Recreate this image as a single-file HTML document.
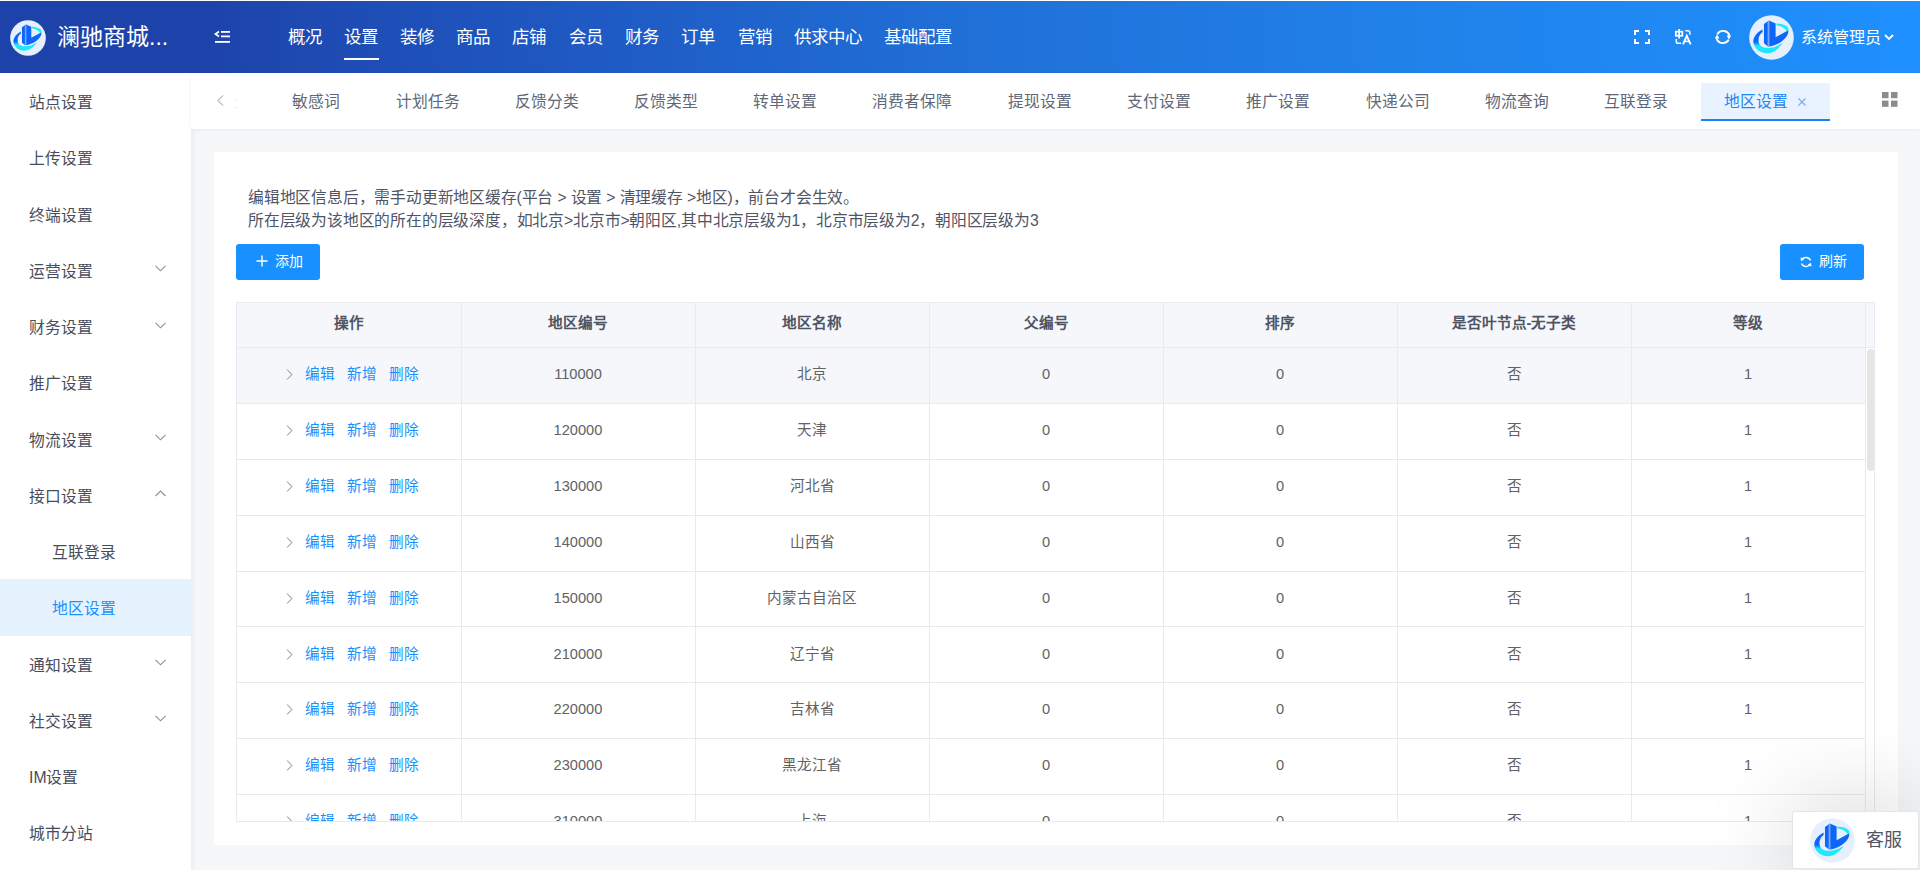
<!DOCTYPE html>
<html lang="zh-CN">
<head>
<meta charset="utf-8">
<style>
*{box-sizing:border-box;margin:0;padding:0}
html,body{width:1920px;height:870px;overflow:hidden}
body{position:relative;background:#f6f7f9;font-family:"Liberation Sans",sans-serif;color:#606266}
.abs{position:absolute}
.hdr{position:absolute;left:0;top:1px;width:1920px;height:72px;
background:linear-gradient(90deg,#1d42aa 0%,#1d42aa 9.95%,#1e4ab2 16.1%,#1f56c0 27.6%,#2070d8 50.5%,#2082e9 73.4%,#1e90ff 100%)}
.topw{position:absolute;left:0;top:0;width:1920px;height:1px;background:#fff}
.brand{position:absolute;left:57px;top:20px;font-size:23px;color:#fff;line-height:34px;white-space:nowrap}
.nav{position:absolute;top:23.3px;font-size:17.5px;color:#fff;line-height:28px;white-space:nowrap}
.navul{position:absolute;left:344px;top:58px;width:35px;height:2px;background:#fff}
.side{position:absolute;left:0;top:73px;width:191px;height:797px;background:#fff}
.sideshadow{position:absolute;left:191px;top:73px;width:5px;height:797px;background:linear-gradient(90deg,rgba(0,0,0,0.04),rgba(0,0,0,0))}
.si{position:absolute;left:0;width:191px;height:56.25px;line-height:59px;font-size:15.75px;color:#474d5c;padding-left:29px;white-space:nowrap}
.si.sub{padding-left:52px}
.si.act{background:#e6f3ff;color:#1890ff}
.chev{position:absolute;left:155px;top:23.5px;width:11px;height:7px}
.tabs{position:absolute;left:191px;top:73px;width:1729px;height:56px;background:#fff;box-shadow:0 1px 4px rgba(0,21,41,0.06)}
.tab{position:absolute;height:55px;line-height:57px;font-size:15.75px;color:#606778;white-space:nowrap}
.card{position:absolute;left:214px;top:152px;width:1684px;height:693px;background:#fff}
.tip{position:absolute;left:248px;font-size:15.75px;letter-spacing:-0.2px;color:#4f5565;white-space:nowrap;line-height:23px}
.btn{position:absolute;top:244px;width:84px;height:36px;background:#1890ff;border-radius:3px;color:#fff;font-size:14px}
.tbl{position:absolute;left:236px;top:302px;width:1639px;height:520px;border:1px solid #e8eaf2;overflow:hidden;background:#fff}
.row{position:absolute;left:0;width:1629px;border-bottom:1px solid #e8eaf2}
.cell{position:absolute;top:0;height:100%;text-align:center;padding-right:2px;font-size:14.625px;color:#606266;white-space:nowrap}
.hrow .cell{font-weight:bold;color:#4f5462}
.lk{color:#1890ff;margin-right:12px}
.op{padding-left:8px}
.lk:last-child{margin-right:0}
.kefu{position:absolute;left:1792px;top:811px;width:127px;height:58px;background:#fff;border:1px solid #e4e6ea;border-radius:3px;box-shadow:0 0 90px rgba(0,0,0,0.21)}

.vl{position:absolute;top:0;width:1px;height:520px;background:#e8eaf2}

</style>
</head>
<body>
<div class="topw"></div><div class="hdr"></div>
<svg viewBox="0 0 46 46" width="36" height="36" style="position:absolute;left:10px;top:20px">
<defs><linearGradient id="lg10" x1="0" y1="27.5" x2="0" y2="31.5" gradientUnits="userSpaceOnUse"><stop offset="0" stop-color="#0b66f9"/><stop offset="1" stop-color="#1ee8fb"/></linearGradient></defs>
<circle cx="23" cy="23" r="22.8" fill="#e6effd"/>
<path d="M13.8 14.8 C7 18.5 3.5 24 4.6 29 C5.8 35 12 39.2 18 39.2 C25 39.2 30.5 34.5 34 29 C29 32 24 33.8 18.5 33.6 C13 33.4 9.6 30.5 9.7 25.5 C9.8 21.5 11.8 18.8 14 17.4 Z" fill="url(#lg10)"/>
<path d="M15.3 9.3 L20.4 5.6 L27.2 8.7 L27.2 22.8 L40.2 15.6 C40.6 20 37 25 31 28.5 C27.5 30.5 23 32 19.5 32.3 L15.3 29 Z" fill="#0b66f9"/>
<path d="M28 8.7 C33 8.9 38.5 10.5 40 13.4 C40.4 14.3 40.4 15.2 40.2 15.9 L38.5 16.8 C37.5 14 34 11.6 28 10.4 Z" fill="#1ee8fb"/>
<rect x="19" y="6.2" width="1.9" height="25.8" fill="#7ba6ff"/>
</svg>
<div class="brand">澜驰商城...</div>
<svg class="abs" style="left:214px;top:30px" width="17" height="14" viewBox="0 0 17 14">
<path d="M5 1.5 L1.5 4 L5 6.5" stroke="#fff" stroke-width="1.8" fill="none"/>
<rect x="7" y="1" width="9" height="1.8" fill="#fff"/><rect x="7" y="5.5" width="9" height="1.8" fill="#fff"/><rect x="1" y="11" width="15" height="1.8" fill="#fff"/>
</svg>
<div class="nav" style="left:288px">概况</div>
<div class="nav" style="left:344px">设置</div>
<div class="nav" style="left:400px">装修</div>
<div class="nav" style="left:456px">商品</div>
<div class="nav" style="left:512px">店铺</div>
<div class="nav" style="left:569px">会员</div>
<div class="nav" style="left:625px">财务</div>
<div class="nav" style="left:681px">订单</div>
<div class="nav" style="left:738px">营销</div>
<div class="nav" style="left:794px">供求中心</div>
<div class="nav" style="left:884px">基础配置</div>
<div class="navul"></div>
<svg class="abs" style="left:1634px;top:30px" width="16" height="14" viewBox="0 0 16 14">
<path d="M1 5 V1 H5 M11 1 H15 V5 M15 9 V13 H11 M5 13 H1 V9" stroke="#fff" stroke-width="2" fill="none"/></svg>
<svg class="abs" style="left:1675px;top:29px" width="17" height="16" viewBox="0 0 17 16">
<rect x="0.9" y="2.6" width="6.4" height="4.2" stroke="#fff" stroke-width="1.7" fill="none"/>
<path d="M4.1 0 V9.6" stroke="#fff" stroke-width="1.8"/>
<path d="M8 15.4 L11.8 6.8 L15.6 15.4" stroke="#fff" stroke-width="1.9" fill="none"/>
<path d="M9.4 12.4 H14.2" stroke="#fff" stroke-width="1.5"/>
<path d="M10.4 1.8 H13 Q14.8 1.8 14.8 3.6 V5.8" stroke="#fff" stroke-width="1.6" fill="none"/>
<path d="M1.3 10 V12.4 Q1.3 14.2 3.1 14.2 H6.2" stroke="#fff" stroke-width="1.6" fill="none"/>
</svg>
<svg class="abs" style="left:1715px;top:29px" width="16" height="16" viewBox="0 0 16 16">
<path d="M2.3 5.2 A6.7 6.7 0 0 1 14.5 6.8" stroke="#fff" stroke-width="1.9" fill="none"/>
<path d="M13.7 10.8 A6.7 6.7 0 0 1 1.5 9.2" stroke="#fff" stroke-width="1.9" fill="none"/>
<path d="M11.6 6.4 L16.2 6.4 L13.9 10.8Z" fill="#fff"/><path d="M-0.2 9.6 L4.4 9.6 L2.1 5.2Z" fill="#fff"/>
</svg>
<svg viewBox="0 0 46 46" width="45" height="45" style="position:absolute;left:1749px;top:15px">
<defs><linearGradient id="lg1749" x1="0" y1="27.5" x2="0" y2="31.5" gradientUnits="userSpaceOnUse"><stop offset="0" stop-color="#0b66f9"/><stop offset="1" stop-color="#1ee8fb"/></linearGradient></defs>
<circle cx="23" cy="23" r="22.8" fill="#e6effd"/>
<path d="M13.8 14.8 C7 18.5 3.5 24 4.6 29 C5.8 35 12 39.2 18 39.2 C25 39.2 30.5 34.5 34 29 C29 32 24 33.8 18.5 33.6 C13 33.4 9.6 30.5 9.7 25.5 C9.8 21.5 11.8 18.8 14 17.4 Z" fill="url(#lg1749)"/>
<path d="M15.3 9.3 L20.4 5.6 L27.2 8.7 L27.2 22.8 L40.2 15.6 C40.6 20 37 25 31 28.5 C27.5 30.5 23 32 19.5 32.3 L15.3 29 Z" fill="#0b66f9"/>
<path d="M28 8.7 C33 8.9 38.5 10.5 40 13.4 C40.4 14.3 40.4 15.2 40.2 15.9 L38.5 16.8 C37.5 14 34 11.6 28 10.4 Z" fill="#1ee8fb"/>
<rect x="19" y="6.2" width="1.9" height="25.8" fill="#7ba6ff"/>
</svg>
<div class="abs" style="left:1801px;top:24px;font-size:16px;line-height:28px;color:#fff;white-space:nowrap">系统管理员</div>
<svg class="abs" style="left:1884px;top:34px" width="10" height="7" viewBox="0 0 10 7"><path d="M1 1 L5 5 L9 1" stroke="#fff" stroke-width="1.8" fill="none"/></svg>
<div class="side"></div><div class="sideshadow"></div>
<div class="si" style="top:73.0px">站点设置</div>
<div class="si" style="top:129.25px">上传设置</div>
<div class="si" style="top:185.5px">终端设置</div>
<div class="si" style="top:241.75px">运营设置<svg class="chev" viewBox="0 0 11 7"><path d="M0.5 0.8 L5.5 5.8 L10.5 0.8" stroke="#8e929c" stroke-width="1.15" fill="none"/></svg></div>
<div class="si" style="top:298.0px">财务设置<svg class="chev" viewBox="0 0 11 7"><path d="M0.5 0.8 L5.5 5.8 L10.5 0.8" stroke="#8e929c" stroke-width="1.15" fill="none"/></svg></div>
<div class="si" style="top:354.25px">推广设置</div>
<div class="si" style="top:410.5px">物流设置<svg class="chev" viewBox="0 0 11 7"><path d="M0.5 0.8 L5.5 5.8 L10.5 0.8" stroke="#8e929c" stroke-width="1.15" fill="none"/></svg></div>
<div class="si" style="top:466.75px">接口设置<svg class="chev" viewBox="0 0 11 7"><path d="M0.5 6 L5.5 1 L10.5 6" stroke="#8e929c" stroke-width="1.15" fill="none"/></svg></div>
<div class="si sub" style="top:523.0px">互联登录</div>
<div class="si sub act" style="top:579.25px">地区设置</div>
<div class="si" style="top:635.5px">通知设置<svg class="chev" viewBox="0 0 11 7"><path d="M0.5 0.8 L5.5 5.8 L10.5 0.8" stroke="#8e929c" stroke-width="1.15" fill="none"/></svg></div>
<div class="si" style="top:691.75px">社交设置<svg class="chev" viewBox="0 0 11 7"><path d="M0.5 0.8 L5.5 5.8 L10.5 0.8" stroke="#8e929c" stroke-width="1.15" fill="none"/></svg></div>
<div class="si" style="top:748.0px">IM设置</div>
<div class="si" style="top:804.25px">城市分站</div>
<div class="tabs"></div>
<div class="abs" style="left:236px;top:100px;width:1px;height:1px;background:#d8dbe0"></div><div class="abs" style="left:236px;top:107px;width:1px;height:1px;background:#c8ccd2"></div>
<svg class="abs" style="left:217px;top:95px" width="7" height="11" viewBox="0 0 7 11"><path d="M6 0.5 L1 5.5 L6 10.5" stroke="#8a8f99" stroke-width="1" fill="none"/></svg>
<div class="tab" style="left:292px;top:73px">敏感词</div>
<div class="tab" style="left:396px;top:73px">计划任务</div>
<div class="tab" style="left:515px;top:73px">反馈分类</div>
<div class="tab" style="left:634px;top:73px">反馈类型</div>
<div class="tab" style="left:753px;top:73px">转单设置</div>
<div class="tab" style="left:872px;top:73px">消费者保障</div>
<div class="tab" style="left:1008px;top:73px">提现设置</div>
<div class="tab" style="left:1127px;top:73px">支付设置</div>
<div class="tab" style="left:1246px;top:73px">推广设置</div>
<div class="tab" style="left:1366px;top:73px">快递公司</div>
<div class="tab" style="left:1485px;top:73px">物流查询</div>
<div class="tab" style="left:1604px;top:73px">互联登录</div>
<div class="abs" style="left:1701px;top:83px;width:129px;height:38px;background:#e8f3ff;border-bottom:2px solid #1683fb"></div>
<div class="tab" style="left:1724px;top:73px;color:#1d86f5">地区设置</div>
<svg class="abs" style="left:1798px;top:98px" width="8" height="8" viewBox="0 0 8 8"><path d="M0.5 0.5 L7.5 7.5 M7.5 0.5 L0.5 7.5" stroke="#7aa8f5" stroke-width="1.1"/></svg>
<svg class="abs" style="left:1882px;top:92px" width="16" height="15" viewBox="0 0 16 15"><rect x="0" y="0" width="6.5" height="6.2" fill="#8c8c8c"/><rect x="9" y="0" width="6.5" height="6.2" fill="#8c8c8c"/><rect x="0" y="8.6" width="6.5" height="6.2" fill="#8c8c8c"/><rect x="9" y="8.6" width="6.5" height="6.2" fill="#8c8c8c"/></svg>
<div class="card"></div>
<div class="tip" style="top:186px">编辑地区信息后，需手动更新地区缓存(平台 &gt; 设置 &gt; 清理缓存 &gt;地区)，前台才会生效。</div>
<div class="tip" style="top:209px">所在层级为该地区的所在的层级深度，如北京&gt;北京市&gt;朝阳区,其中北京层级为1，北京市层级为2，朝阳区层级为3</div>
<div class="btn" style="left:236px"><svg class="abs" style="left:20px;top:11px" width="12" height="12" viewBox="0 0 12 12"><path d="M6 0.5 V11.5 M0.5 6 H11.5" stroke="#fff" stroke-width="1.4"/></svg><span class="abs" style="left:39px;top:0;line-height:34.5px">添加</span></div>
<div class="btn" style="left:1780px"><svg class="abs" style="left:20px;top:12px" width="12" height="12" viewBox="0 0 12 12"><path d="M10.5 4.5 A5 5 0 0 0 1.8 3.6" stroke="#fff" stroke-width="1.4" fill="none"/><path d="M1.5 7.5 A5 5 0 0 0 10.2 8.4" stroke="#fff" stroke-width="1.4" fill="none"/><path d="M0.6 1.2 L1 5.2 L4.2 3.4Z" fill="#fff"/><path d="M11.4 10.8 L11 6.8 L7.8 8.6Z" fill="#fff"/></svg><span class="abs" style="left:39px;top:0;line-height:34.5px">刷新</span></div>
<div class="tbl">
<div class="row hrow" style="top:0px;height:45px;background:#f5f7fb"><div class="cell" style="left:0px;width:225px;line-height:40.5px">操作</div><div class="cell" style="left:225px;width:234px;line-height:40.5px">地区编号</div><div class="cell" style="left:459px;width:234px;line-height:40.5px">地区名称</div><div class="cell" style="left:693px;width:234px;line-height:40.5px">父编号</div><div class="cell" style="left:927px;width:234px;line-height:40.5px">排序</div><div class="cell" style="left:1161px;width:234px;line-height:40.5px">是否叶节点-无子类</div><div class="cell" style="left:1395px;width:234px;line-height:40.5px">等级</div></div>
<div class="row " style="top:45.0px;height:55.9px;background:#f5f7fb"><div class="cell" style="left:0px;width:225px;line-height:53.4px"><span class="op"><svg width="7" height="11" viewBox="0 0 7 11" style="vertical-align:-1px;margin-right:12.5px"><path d="M1 0.5 L6 5.5 L1 10.5" stroke="#7a7f8a" stroke-width="1" fill="none"/></svg><span class="lk">编辑</span><span class="lk">新增</span><span class="lk">删除</span></span></div><div class="cell" style="left:225px;width:234px;line-height:53.4px">110000</div><div class="cell" style="left:459px;width:234px;line-height:53.4px">北京</div><div class="cell" style="left:693px;width:234px;line-height:53.4px">0</div><div class="cell" style="left:927px;width:234px;line-height:53.4px">0</div><div class="cell" style="left:1161px;width:234px;line-height:53.4px">否</div><div class="cell" style="left:1395px;width:234px;line-height:53.4px">1</div></div>
<div class="row " style="top:100.9px;height:55.9px;background:#fff"><div class="cell" style="left:0px;width:225px;line-height:53.4px"><span class="op"><svg width="7" height="11" viewBox="0 0 7 11" style="vertical-align:-1px;margin-right:12.5px"><path d="M1 0.5 L6 5.5 L1 10.5" stroke="#7a7f8a" stroke-width="1" fill="none"/></svg><span class="lk">编辑</span><span class="lk">新增</span><span class="lk">删除</span></span></div><div class="cell" style="left:225px;width:234px;line-height:53.4px">120000</div><div class="cell" style="left:459px;width:234px;line-height:53.4px">天津</div><div class="cell" style="left:693px;width:234px;line-height:53.4px">0</div><div class="cell" style="left:927px;width:234px;line-height:53.4px">0</div><div class="cell" style="left:1161px;width:234px;line-height:53.4px">否</div><div class="cell" style="left:1395px;width:234px;line-height:53.4px">1</div></div>
<div class="row " style="top:156.8px;height:55.9px;background:#fff"><div class="cell" style="left:0px;width:225px;line-height:53.4px"><span class="op"><svg width="7" height="11" viewBox="0 0 7 11" style="vertical-align:-1px;margin-right:12.5px"><path d="M1 0.5 L6 5.5 L1 10.5" stroke="#7a7f8a" stroke-width="1" fill="none"/></svg><span class="lk">编辑</span><span class="lk">新增</span><span class="lk">删除</span></span></div><div class="cell" style="left:225px;width:234px;line-height:53.4px">130000</div><div class="cell" style="left:459px;width:234px;line-height:53.4px">河北省</div><div class="cell" style="left:693px;width:234px;line-height:53.4px">0</div><div class="cell" style="left:927px;width:234px;line-height:53.4px">0</div><div class="cell" style="left:1161px;width:234px;line-height:53.4px">否</div><div class="cell" style="left:1395px;width:234px;line-height:53.4px">1</div></div>
<div class="row " style="top:212.7px;height:55.9px;background:#fff"><div class="cell" style="left:0px;width:225px;line-height:53.4px"><span class="op"><svg width="7" height="11" viewBox="0 0 7 11" style="vertical-align:-1px;margin-right:12.5px"><path d="M1 0.5 L6 5.5 L1 10.5" stroke="#7a7f8a" stroke-width="1" fill="none"/></svg><span class="lk">编辑</span><span class="lk">新增</span><span class="lk">删除</span></span></div><div class="cell" style="left:225px;width:234px;line-height:53.4px">140000</div><div class="cell" style="left:459px;width:234px;line-height:53.4px">山西省</div><div class="cell" style="left:693px;width:234px;line-height:53.4px">0</div><div class="cell" style="left:927px;width:234px;line-height:53.4px">0</div><div class="cell" style="left:1161px;width:234px;line-height:53.4px">否</div><div class="cell" style="left:1395px;width:234px;line-height:53.4px">1</div></div>
<div class="row " style="top:268.6px;height:55.9px;background:#fff"><div class="cell" style="left:0px;width:225px;line-height:53.4px"><span class="op"><svg width="7" height="11" viewBox="0 0 7 11" style="vertical-align:-1px;margin-right:12.5px"><path d="M1 0.5 L6 5.5 L1 10.5" stroke="#7a7f8a" stroke-width="1" fill="none"/></svg><span class="lk">编辑</span><span class="lk">新增</span><span class="lk">删除</span></span></div><div class="cell" style="left:225px;width:234px;line-height:53.4px">150000</div><div class="cell" style="left:459px;width:234px;line-height:53.4px">内蒙古自治区</div><div class="cell" style="left:693px;width:234px;line-height:53.4px">0</div><div class="cell" style="left:927px;width:234px;line-height:53.4px">0</div><div class="cell" style="left:1161px;width:234px;line-height:53.4px">否</div><div class="cell" style="left:1395px;width:234px;line-height:53.4px">1</div></div>
<div class="row " style="top:324.5px;height:55.9px;background:#fff"><div class="cell" style="left:0px;width:225px;line-height:53.4px"><span class="op"><svg width="7" height="11" viewBox="0 0 7 11" style="vertical-align:-1px;margin-right:12.5px"><path d="M1 0.5 L6 5.5 L1 10.5" stroke="#7a7f8a" stroke-width="1" fill="none"/></svg><span class="lk">编辑</span><span class="lk">新增</span><span class="lk">删除</span></span></div><div class="cell" style="left:225px;width:234px;line-height:53.4px">210000</div><div class="cell" style="left:459px;width:234px;line-height:53.4px">辽宁省</div><div class="cell" style="left:693px;width:234px;line-height:53.4px">0</div><div class="cell" style="left:927px;width:234px;line-height:53.4px">0</div><div class="cell" style="left:1161px;width:234px;line-height:53.4px">否</div><div class="cell" style="left:1395px;width:234px;line-height:53.4px">1</div></div>
<div class="row " style="top:380.4px;height:55.9px;background:#fff"><div class="cell" style="left:0px;width:225px;line-height:53.4px"><span class="op"><svg width="7" height="11" viewBox="0 0 7 11" style="vertical-align:-1px;margin-right:12.5px"><path d="M1 0.5 L6 5.5 L1 10.5" stroke="#7a7f8a" stroke-width="1" fill="none"/></svg><span class="lk">编辑</span><span class="lk">新增</span><span class="lk">删除</span></span></div><div class="cell" style="left:225px;width:234px;line-height:53.4px">220000</div><div class="cell" style="left:459px;width:234px;line-height:53.4px">吉林省</div><div class="cell" style="left:693px;width:234px;line-height:53.4px">0</div><div class="cell" style="left:927px;width:234px;line-height:53.4px">0</div><div class="cell" style="left:1161px;width:234px;line-height:53.4px">否</div><div class="cell" style="left:1395px;width:234px;line-height:53.4px">1</div></div>
<div class="row " style="top:436.3px;height:55.9px;background:#fff"><div class="cell" style="left:0px;width:225px;line-height:53.4px"><span class="op"><svg width="7" height="11" viewBox="0 0 7 11" style="vertical-align:-1px;margin-right:12.5px"><path d="M1 0.5 L6 5.5 L1 10.5" stroke="#7a7f8a" stroke-width="1" fill="none"/></svg><span class="lk">编辑</span><span class="lk">新增</span><span class="lk">删除</span></span></div><div class="cell" style="left:225px;width:234px;line-height:53.4px">230000</div><div class="cell" style="left:459px;width:234px;line-height:53.4px">黑龙江省</div><div class="cell" style="left:693px;width:234px;line-height:53.4px">0</div><div class="cell" style="left:927px;width:234px;line-height:53.4px">0</div><div class="cell" style="left:1161px;width:234px;line-height:53.4px">否</div><div class="cell" style="left:1395px;width:234px;line-height:53.4px">1</div></div>
<div class="row " style="top:492.2px;height:55.9px;background:#fff"><div class="cell" style="left:0px;width:225px;line-height:53.4px"><span class="op"><svg width="7" height="11" viewBox="0 0 7 11" style="vertical-align:-1px;margin-right:12.5px"><path d="M1 0.5 L6 5.5 L1 10.5" stroke="#7a7f8a" stroke-width="1" fill="none"/></svg><span class="lk">编辑</span><span class="lk">新增</span><span class="lk">删除</span></span></div><div class="cell" style="left:225px;width:234px;line-height:53.4px">310000</div><div class="cell" style="left:459px;width:234px;line-height:53.4px">上海</div><div class="cell" style="left:693px;width:234px;line-height:53.4px">0</div><div class="cell" style="left:927px;width:234px;line-height:53.4px">0</div><div class="cell" style="left:1161px;width:234px;line-height:53.4px">否</div><div class="cell" style="left:1395px;width:234px;line-height:53.4px">1</div></div>
<div class="vl" style="left:224px"></div>
<div class="vl" style="left:458px"></div>
<div class="vl" style="left:692px"></div>
<div class="vl" style="left:926px"></div>
<div class="vl" style="left:1160px"></div>
<div class="vl" style="left:1394px"></div>
<div class="vl" style="left:1628px"></div>
<div class="abs" style="left:1629px;top:0;width:9px;height:45px;background:#f5f7fb;border-bottom:1px solid #e8eaf2"></div>
<div class="abs" style="left:1630px;top:46px;width:8px;height:122px;background:#e5e5e5;border-radius:4px"></div>
</div>
<div class="kefu"></div>
<svg viewBox="0 0 46 46" width="45" height="45" style="position:absolute;left:1810px;top:818px">
<defs><linearGradient id="lg1810" x1="0" y1="27.5" x2="0" y2="31.5" gradientUnits="userSpaceOnUse"><stop offset="0" stop-color="#0b66f9"/><stop offset="1" stop-color="#1ee8fb"/></linearGradient></defs>
<circle cx="23" cy="23" r="22.8" fill="#e6effd"/>
<path d="M13.8 14.8 C7 18.5 3.5 24 4.6 29 C5.8 35 12 39.2 18 39.2 C25 39.2 30.5 34.5 34 29 C29 32 24 33.8 18.5 33.6 C13 33.4 9.6 30.5 9.7 25.5 C9.8 21.5 11.8 18.8 14 17.4 Z" fill="url(#lg1810)"/>
<path d="M15.3 9.3 L20.4 5.6 L27.2 8.7 L27.2 22.8 L40.2 15.6 C40.6 20 37 25 31 28.5 C27.5 30.5 23 32 19.5 32.3 L15.3 29 Z" fill="#0b66f9"/>
<path d="M28 8.7 C33 8.9 38.5 10.5 40 13.4 C40.4 14.3 40.4 15.2 40.2 15.9 L38.5 16.8 C37.5 14 34 11.6 28 10.4 Z" fill="#1ee8fb"/>
<rect x="19" y="6.2" width="1.9" height="25.8" fill="#7ba6ff"/>
</svg>
<div class="abs" style="left:1866px;top:826px;font-size:18px;line-height:28px;color:#505560">客服</div>
</body>
</html>
